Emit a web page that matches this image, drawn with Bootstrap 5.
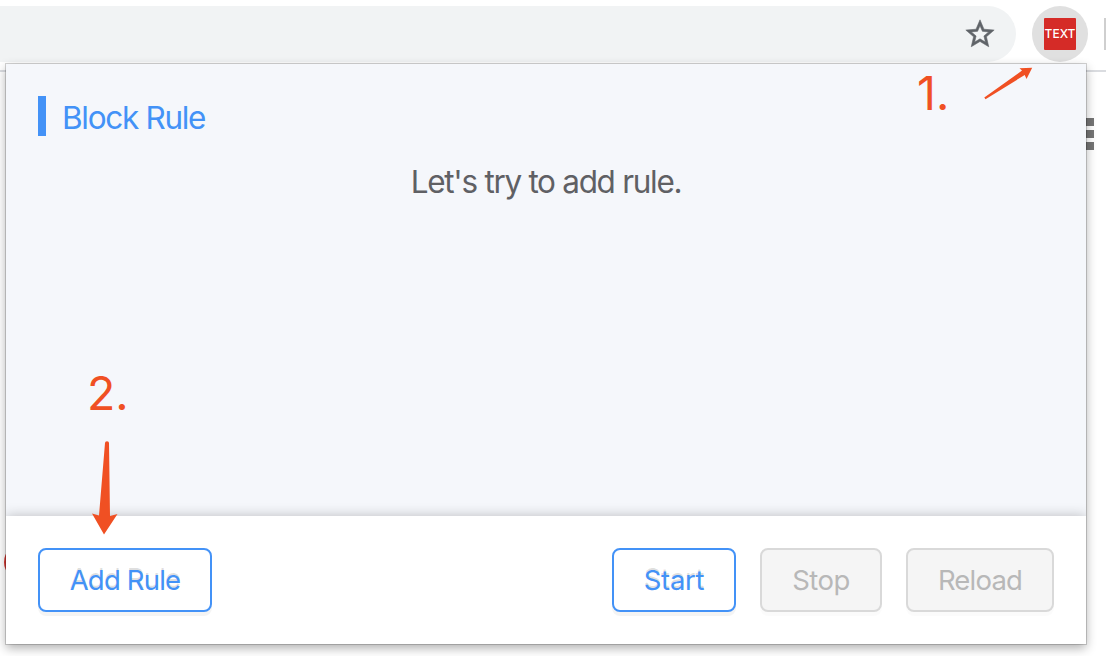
<!DOCTYPE html>
<html lang="en">
  <head>
    <meta charset="UTF-8" />
    <meta name="viewport" content="width=device-width, initial-scale=1.0" />
    <title>Block Rule</title>
    <link
      href="https://cdn.jsdelivr.net/npm/bootstrap@5.3.3/dist/css/bootstrap.min.css"
      rel="stylesheet"
    />
    <style>
      body {
        height: 656px;
        background-color: white;
        font-family: Inter, "Liberation Sans", sans-serif;
      }

      .browser-bar {
        height: 72px;
        padding-top: 6px;
        border-bottom: 2px solid #dadce0;
      }

      .address-field {
        width: 1016px;
        height: 56px;
        padding-right: 19px;
        background-color: #f1f3f4;
        border-radius: 0 28px 28px 0;
      }

      .extension-btn {
        width: 56px;
        height: 56px;
        margin-left: 16px;
        background-color: #e0e0e0;
      }

      .extension-icon {
        width: 32px;
        height: 32px;
        background-color: #d52b27;
        border-radius: 1px;
        color: white;
        font-size: 12px;
        font-weight: 500;
        letter-spacing: 0;
      }

      .bar-divider {
        width: 2px;
        height: 32px;
        margin: 12px 0 0 16px;
        background-color: #cfcfcf;
      }

      .page-menu {
        top: 118px;
        left: 1078px;
        width: 16px;
      }

      .page-menu span {
        height: 8px;
        background-color: #757575;
      }

      .page-dot {
        top: 544px;
        left: 4px;
        width: 36px;
        height: 36px;
        background-color: #d93a34;
      }

      .popup {
        top: 64px;
        left: 6px;
        width: 1080px;
        height: 580px;
        background-color: #f5f7fb;
        box-shadow: 0 0 0 1px rgba(0, 0, 0, 0.17), 0 4px 10px rgba(0, 0, 0, 0.32);
      }

      .popup-title {
        height: 40px;
        margin: 32px 0 0 32px;
        padding-left: 16px;
        border-left: 8px solid #4392f7;
        color: #4392f7;
        font-size: 31.5px;
        line-height: 43px;
        letter-spacing: -1.3px;
      }

      .popup-hint {
        margin-top: 21px;
        color: #5f6064;
        font-size: 31.5px;
        line-height: 49px;
        letter-spacing: -1.3px;
      }

      .popup-footer {
        height: 128px;
        padding: 0 32px;
        gap: 24px;
        background-color: white;
        box-shadow: 0 0 12px rgba(0, 0, 0, 0.24);
        clip-path: inset(-16px 0 0 0);
      }

      .rule-btn {
        height: 64px;
        padding: 0;
        background-color: white;
        border: 2px solid #4392f7;
        border-radius: 8px;
        box-shadow: 0 4px 0 rgba(0, 0, 0, 0.045);
        color: #4392f7;
        font-size: 27.5px;
        line-height: 61px;
        letter-spacing: -0.8px;
        text-shadow: 0 -2px 0 rgba(0, 0, 0, 0.12);
      }

      .rule-btn:disabled {
        background-color: #f5f5f5;
        border-color: #d9d9d9;
        box-shadow: 0 4px 0 rgba(0, 0, 0, 0.015);
        color: #b8b8b8;
        text-shadow: none;
        opacity: 1;
      }

      .btn-add { width: 174px; }
      .btn-start { width: 124px; letter-spacing: -0.3px; }
      .btn-stop { width: 122px; letter-spacing: -0.5px; }
      .btn-reload { width: 148px; }

      .step-label {
        color: #f05023;
        font-size: 46.5px;
        line-height: 56px;
      }

      .step-one { top: 65px; left: 917px; }
      .step-two { top: 365px; left: 87px; }

      .step-arrows {
        top: 0;
        left: 0;
        pointer-events: none;
      }
    </style>
  </head>
  <body class="position-relative overflow-hidden">
    <header class="browser-bar d-flex">
      <div class="address-field d-flex align-items-center justify-content-end flex-shrink-0">
        <svg width="34" height="34" viewBox="0 0 24 24" fill="#5f6368" stroke="#5f6368" stroke-width="0.4">
          <path d="M22 9.24l-7.19-.62L12 2 9.19 8.63 2 9.24l5.46 4.73L5.82 21 12 17.27 18.18 21l-1.63-7.03L22 9.24zM12 15.4l-3.76 2.27 1-4.28-3.32-2.88 4.38-.38L12 6.1l1.71 4.04 4.38.38-3.32 2.88 1 4.28L12 15.4z" />
        </svg>
      </div>
      <div class="extension-btn rounded-circle d-flex align-items-center justify-content-center flex-shrink-0">
        <div class="extension-icon d-flex align-items-center justify-content-center">TEXT</div>
      </div>
      <div class="bar-divider flex-shrink-0"></div>
    </header>

    <!-- Page content peeking out behind the popup -->
    <div class="page-menu position-absolute d-flex flex-column gap-1">
      <span></span><span></span><span></span>
    </div>
    <div class="page-dot position-absolute rounded-circle"></div>

    <!-- Extension popup -->
    <main class="popup position-absolute d-flex flex-column">
      <h1 class="popup-title fw-normal">Block Rule</h1>
      <p class="popup-hint text-center mb-0">Let's try to add rule.</p>
      <div class="popup-footer d-flex align-items-center mt-auto">
        <button type="button" class="btn rule-btn btn-add me-auto">Add Rule</button>
        <button type="button" class="btn rule-btn btn-start">Start</button>
        <button type="button" class="btn rule-btn btn-stop" disabled>Stop</button>
        <button type="button" class="btn rule-btn btn-reload" disabled>Reload</button>
      </div>
    </main>

    <!-- Step annotations -->
    <div class="step-label step-one position-absolute">1.</div>
    <div class="step-label step-two position-absolute">2.</div>
    <svg class="step-arrows position-absolute" width="1106" height="656" fill="#f05023">
      <path d="M984.3 97.6L1022 70.600L1019.500 68.300L1032.200 67.800L1026.500 79L1024.700 75L985.500 99.200Z" />
      <path d="M105 443Q105 441.300 107 441.300Q109 441.300 109 443L110 516L117.500 514L104 534.500L92 513.500L99 515.500Z" />
    </svg>

    <script src="https://cdn.jsdelivr.net/npm/bootstrap@5.3.3/dist/js/bootstrap.bundle.min.js"></script>
  </body>
</html>
